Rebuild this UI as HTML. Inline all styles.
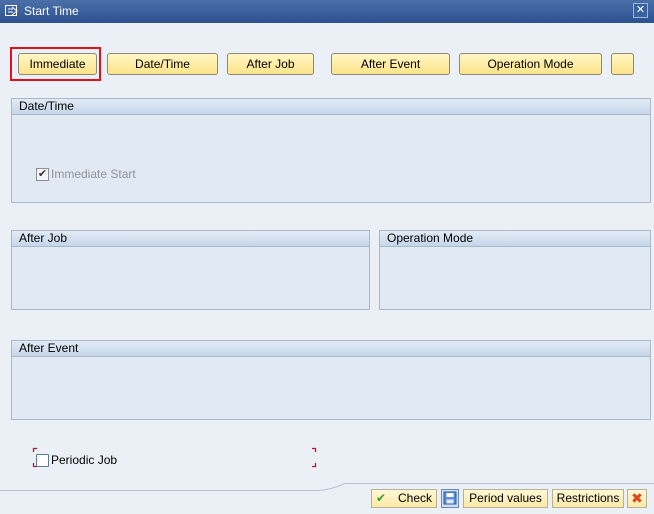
<!DOCTYPE html>
<html><head><meta charset="utf-8"><style>
*{margin:0;padding:0;box-sizing:border-box}
body{width:654px;height:514px;overflow:hidden;background:#eaf0f6;font-family:"Liberation Sans","DejaVu Sans",sans-serif;font-size:12px;color:#000;position:relative}
.title{position:absolute;left:0;top:0;width:654px;height:23px;background:linear-gradient(#4b6fa8,#2c5190);color:#fff;font-size:12px;line-height:22px;padding-left:24px}
.close{position:absolute;right:6px;top:3px;width:15px;height:15px;border:1px solid #9fb6d8;background:#3a62a0;color:#fff;font-size:11px;line-height:13px;text-align:center;font-weight:bold}
.btn{position:absolute;top:53px;height:22px;border:1px solid #8c8a78;border-radius:3px;background:linear-gradient(#fff6c4,#fde48a);text-align:center;line-height:20px;font-size:12px}
.panel{position:absolute;border:1px solid #a9b9cb;background:#e1eaf3}
.ph{height:16px;background:linear-gradient(#e2ebf5,#c5d6ea);border-bottom:1px solid #a9b9cb;padding-left:7px;line-height:15px;font-size:12px}
.fb{position:absolute;top:489px;height:19px;border:1px solid #b7b293;background:linear-gradient(#fff8d6,#fbe9a6);line-height:17px;font-size:12px;text-align:center}
</style></head><body>
<div class="title">Start Time</div>
<svg style="position:absolute;left:5px;top:5px" width="14" height="12"><rect x="0.5" y="0.5" width="11" height="10" fill="none" stroke="#fff"/><path d="M3 4h5M3 7h5M7 2l5 4-5 4" fill="none" stroke="#fff"/></svg>
<div class="close">✕</div>

<div style="position:absolute;left:10px;top:47px;width:91px;height:34px;border:2px solid #e0101c"></div>
<div class="btn" style="left:18px;width:79px">Immediate</div>
<div class="btn" style="left:107px;width:111px">Date/Time</div>
<div class="btn" style="left:227px;width:87px">After Job</div>
<div class="btn" style="left:331px;width:119px">After Event</div>
<div class="btn" style="left:459px;width:143px">Operation Mode</div>
<div class="btn" style="left:611px;width:23px"></div>

<div class="panel" style="left:11px;top:98px;width:640px;height:105px"><div class="ph">Date/Time</div></div>
<div style="position:absolute;left:36px;top:168px;width:13px;height:13px;border:1px solid #8a8f96;background:#f4f6f8;font-size:11px;line-height:11px;text-align:center;color:#333">✔</div>
<div style="position:absolute;left:51px;top:167px;color:#8d939a">Immediate Start</div>

<div class="panel" style="left:11px;top:230px;width:359px;height:80px"><div class="ph">After Job</div></div>
<div class="panel" style="left:379px;top:230px;width:272px;height:80px"><div class="ph">Operation Mode</div></div>
<div class="panel" style="left:11px;top:340px;width:640px;height:80px"><div class="ph">After Event</div></div>

<svg style="position:absolute;left:0;top:440px" width="654" height="74">
<path d="M33.5 8v4M33 8.5h4M33.5 27v-4M33 26.5h4M315.5 8v4M316 8.5h-4M315.5 27v-4M316 26.5h-4" stroke="#c0102a" stroke-width="1.3" fill="none"/>
<path d="M0 50.5H318Q330 50 345 43.5H654" stroke="#b9c3cf" fill="none"/>
</svg>
<div style="position:absolute;left:36px;top:454px;width:13px;height:13px;border:1px solid #5d7895;background:#fff;border-radius:1px"></div>
<div style="position:absolute;left:51px;top:453px">Periodic Job</div>

<div class="fb" style="left:371px;width:66px"><span style="color:#3a9a2a;font-weight:bold;position:absolute;left:4px">✔</span><span style="padding-left:22px">Check</span></div>
<div class="fb" style="left:441px;width:18px;border-color:#6d89b0;background:#cfe0f4"><svg width="14" height="14" style="margin-top:1px"><rect x="1" y="1" width="12" height="12" fill="#5b8fd4" stroke="#2d5a9a"/><rect x="3.5" y="2" width="7" height="4" fill="#fff"/><rect x="3.5" y="8.5" width="7" height="4" fill="#dce8f6"/></svg></div>
<div class="fb" style="left:463px;width:85px">Period values</div>
<div class="fb" style="left:552px;width:72px">Restrictions</div>
<div class="fb" style="left:627px;width:20px;color:#e0461e;font-weight:bold;font-size:14px">✖</div>
</body></html>
